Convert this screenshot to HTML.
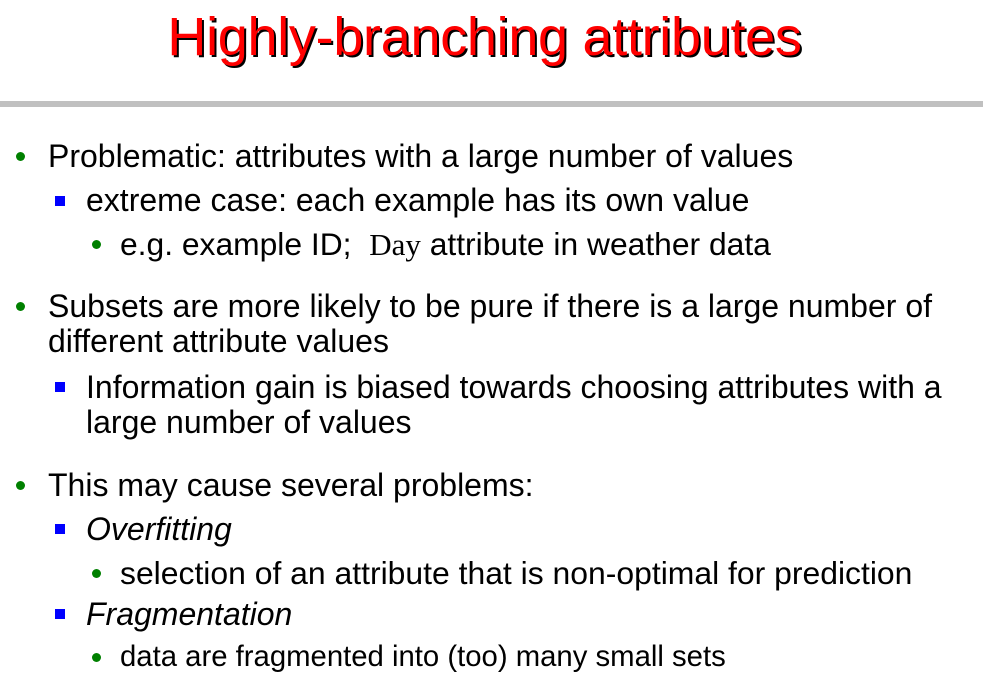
<!DOCTYPE html>
<html><head><style>
body{margin:0;width:983px;height:684px;background:#fff;position:relative;overflow:hidden;font-family:"Liberation Sans",Arial,sans-serif;color:#000}
.t{position:absolute;left:-7px;width:983px;text-align:center;top:6px;font-size:54px;color:#f00;text-shadow:2px 2px 0 #000;letter-spacing:-0.3px}
.bar{position:absolute;left:0;top:101px;width:983px;height:6px;background:#c0c0c0}
.l{position:absolute;white-space:nowrap;line-height:34px}
.a{left:48px;font-size:32px}
.b{left:86px;font-size:32px}
.c{left:120px;font-size:31.9px}
.d{position:absolute;width:9px;height:9px;border-radius:50%;background:#008000}
.s{position:absolute;width:10px;height:10px;background:#00f}
</style></head><body>
<div class="t">Highly-branching attributes</div>
<div class="bar"></div>

<div class="d" style="left:16px;top:152px"></div><div class="l a" style="top:139px">Problematic: attributes with a large number of values</div>
<div class="s" style="left:55px;top:196px"></div><div class="l b" style="top:183px">extreme case: each example has its own value</div>
<div class="d" style="left:92px;top:240px"></div><div class="l c" style="top:227px;font-size:31.8px">e.g. example ID;&nbsp; <span style="font-family:'Liberation Serif',serif;font-size:31px">Day</span> attribute in weather data</div>

<div class="d" style="left:16px;top:302px"></div><div class="l a" style="top:289px">Subsets are more likely to be pure if there is a large number of</div>
<div class="l a" style="top:324px">different attribute values</div>
<div class="s" style="left:55px;top:382px"></div><div class="l b" style="top:370px">Information gain is biased towards choosing attributes with a</div>
<div class="l b" style="top:405px">large number of values</div>

<div class="d" style="left:16px;top:481px"></div><div class="l a" style="top:468px">This may cause several problems:</div>
<div class="s" style="left:55px;top:524px"></div><div class="l b" style="top:512px;font-style:italic">Overfitting</div>
<div class="d" style="left:92px;top:569px"></div><div class="l c" style="top:556px">selection of an attribute that is non-optimal for prediction</div>
<div class="s" style="left:55px;top:609px"></div><div class="l b" style="top:597px;font-style:italic">Fragmentation</div>
<div class="d" style="left:92px;top:653px"></div><div class="l c" style="top:640px;font-size:29.3px">data are fragmented into (too) many small sets</div>
</body></html>
